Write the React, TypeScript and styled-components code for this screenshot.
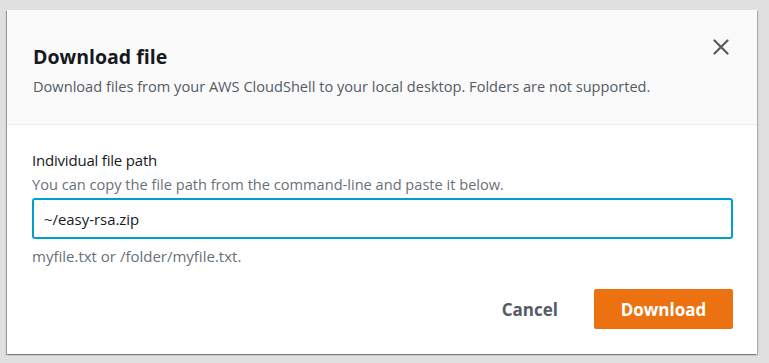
import styled, { createGlobalStyle } from "styled-components";

const GlobalStyle = createGlobalStyle`
  html, body {
    margin: 0;
    background: #dfe0df;
    font-family: "Open Sans", "Noto Sans", sans-serif;
  }
`;

const Backdrop = styled.div`
  width: 769px;
  height: 363px;
  box-sizing: border-box;
  padding: 10px 12px 9px 7px;
`;

const Modal = styled.div`
  width: 750px;
  height: 344px;
  background: #ffffff;
  box-shadow: -1px 1px 1px rgba(0, 28, 36, 0.35), 1px 1px 1px rgba(0, 28, 36, 0.25);
  display: flex;
  flex-direction: column;
`;

const Header = styled.div`
  background: #fafafa;
  border-bottom: 1px solid #eaeded;
  padding: 28px 28px 0 26px;
  height: 115px;
  box-sizing: border-box;
  display: flex;
  justify-content: space-between;
  align-items: flex-start;
`;

const HeaderText = styled.div`
  padding-top: 4px;
  display: flex;
  flex-direction: column;
`;

const Title = styled.h2`
  margin: 0;
  font-size: 19.5px;
  line-height: 30px;
  font-weight: 700;
  color: #16191f;
`;

const Subtitle = styled.p`
  margin: 4px 0 0;
  font-size: 14.6px;
  line-height: 20px;
  color: #545b64;
`;

const CloseButton = styled.button`
  margin-top: 1px;
  padding: 0;
  border: none;
  background: transparent;
  width: 16px;
  height: 16px;
  display: flex;
  align-items: center;
  justify-content: center;
  color: #545b64;
  cursor: pointer;
`;

const Body = styled.div`
  padding: 22px 24px 0 25px;
  display: flex;
  flex-direction: column;
`;

const Label = styled.label`
  font-size: 15px;
  line-height: 22px;
  letter-spacing: -0.2px;
  color: #16191f;
  margin-top: 2px;
`;

const Description = styled.div`
  margin-top: 3px;
  font-size: 14.6px;
  line-height: 20px;
  color: #687078;
`;

const Input = styled.input`
  margin-top: 4px;
  height: 41px;
  box-sizing: border-box;
  border: 2px solid #00a1c9;
  border-radius: 3px;
  padding: 0 10px;
  font-family: inherit;
  font-size: 14.9px;
  color: #16191f;
  outline: none;
  caret-color: #16191f;
`;

const Hint = styled.div`
  margin-top: 7px;
  font-size: 15px;
  line-height: 20px;
  color: #687078;
`;

const Footer = styled.div`
  margin-top: auto;
  padding: 0 24px 25px;
  display: flex;
  justify-content: flex-end;
  align-items: center;
  gap: 10px;
`;

const Button = styled.button<{ $primary?: boolean }>`
  height: 40px;
  padding: 0 26px;
  border: none;
  border-radius: 2px;
  font-family: inherit;
  font-size: 17px;
  font-weight: 700;
  cursor: pointer;
  background: ${(p) => (p.$primary ? "#ec7211" : "transparent")};
  color: ${(p) => (p.$primary ? "#ffffff" : "#545b64")};
  width: ${(p) => (p.$primary ? "139px" : "auto")};
`;

export default function App() {
  return (
    <>
      <GlobalStyle />
      <Backdrop>
        <Modal>
          <Header>
            <HeaderText>
              <Title>Download file</Title>
              <Subtitle>
                Download files from your AWS CloudShell to your local desktop.
                Folders are not supported.
              </Subtitle>
            </HeaderText>
            <CloseButton aria-label="Close">
              <svg width="16" height="16" viewBox="0 0 16 16" fill="none">
                <path
                  d="M1.5 1.5l13 13M14.5 1.5l-13 13"
                  stroke="currentColor"
                  strokeWidth="2.2"
                  strokeLinecap="round"
                />
              </svg>
            </CloseButton>
          </Header>
          <Body>
            <Label htmlFor="path">Individual file path</Label>
            <Description>
              You can copy the file path from the command-line and paste it below.
            </Description>
            <Input id="path" defaultValue="~/easy-rsa.zip" />
            <Hint>myfile.txt or /folder/myfile.txt.</Hint>
          </Body>
          <Footer>
            <Button>Cancel</Button>
            <Button $primary>Download</Button>
          </Footer>
        </Modal>
      </Backdrop>
    </>
  );
}
